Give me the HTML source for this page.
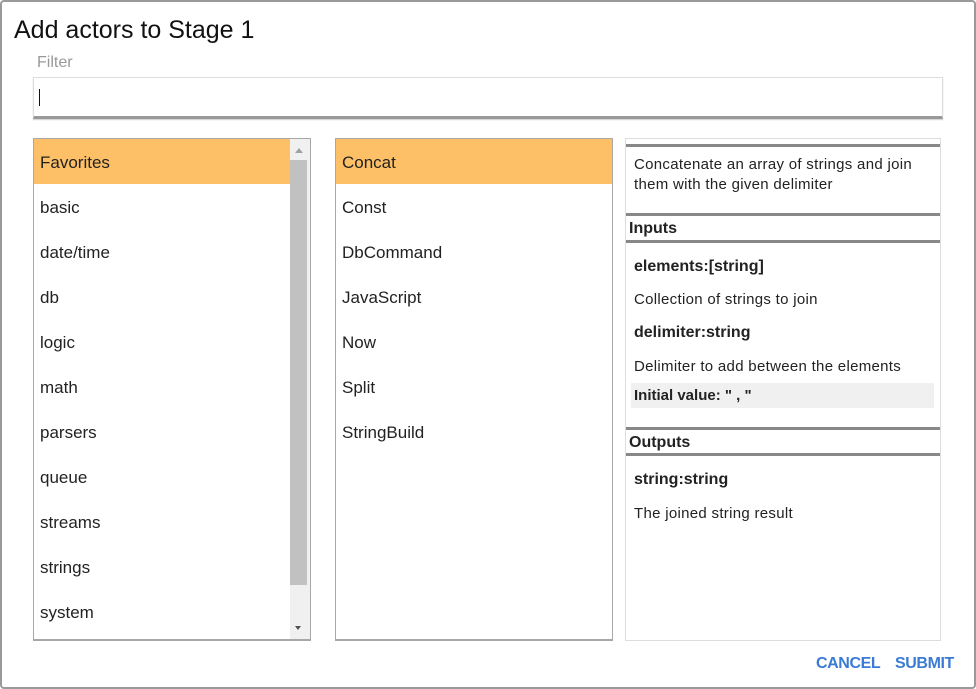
<!DOCTYPE html>
<html><head><style>
*{margin:0;padding:0;box-sizing:border-box}
body{width:976px;height:689px;background:#fff;font-family:"Liberation Sans",Arial,sans-serif;color:#222;position:relative;overflow:hidden}
.dlg{position:absolute;left:0;top:0;width:976px;height:689px;border:2px solid #9a9a9a;border-radius:4px}
.a{position:absolute;white-space:nowrap}
.list{position:absolute;top:138px;height:503px;border:1px solid #a8a8a8;border-bottom:2px solid #a8a8a8}
.it{height:45px;line-height:48px;padding-left:6px;font-size:17px;color:#222}
.sel{background:#fec066}
.hl{position:absolute;left:626px;width:314px;height:3px;background:#888}
.b{font-weight:bold}
.t{font-size:15px;line-height:20px;letter-spacing:.3px}
</style></head><body>
<div class="dlg"></div>
<div class="a" style="left:14px;top:16px;font-size:25px;color:#111">Add actors to Stage 1</div>
<div class="a" style="left:37px;top:54px;font-size:16px;color:#999">Filter</div>
<div class="a" style="left:33px;top:77px;width:910px;height:42px;border:1px solid #ddd;border-bottom:3px solid #999;box-shadow:0 1px 1px #ccc"></div>
<div class="a" style="left:39px;top:89px;width:1px;height:17px;background:#111"></div>

<div class="list" style="left:33px;width:278px">
<div style="width:256px">
<div class="it sel">Favorites</div><div class="it">basic</div><div class="it">date/time</div><div class="it">db</div><div class="it">logic</div><div class="it">math</div><div class="it">parsers</div><div class="it">queue</div><div class="it">streams</div><div class="it">strings</div><div class="it">system</div>
</div>
<div class="a" style="left:256px;top:0;width:20px;height:500px;background:#f0f0f0"></div>
<div class="a" style="left:256px;top:21px;width:17px;height:425px;background:#c1c1c1"></div>
<div class="a" style="left:261px;top:9px;width:0;height:0;border-left:4px solid transparent;border-right:4px solid transparent;border-bottom:5px solid #a0a0a0"></div>
<div class="a" style="left:261px;top:487px;width:0;height:0;border-left:3px solid transparent;border-right:3px solid transparent;border-top:4px solid #505050"></div>
</div>

<div class="list" style="left:335px;width:278px">
<div class="it sel">Concat</div><div class="it">Const</div><div class="it">DbCommand</div><div class="it">JavaScript</div><div class="it">Now</div><div class="it">Split</div><div class="it">StringBuild</div>
</div>

<div class="a" style="left:625px;top:138px;width:316px;height:503px;border:1px solid #ddd"></div>
<div class="hl" style="top:144px"></div>
<div class="a t" style="left:634px;top:155px">Concatenate an array of strings and join<br>them with the given delimiter</div>
<div class="hl" style="top:213px"></div>
<div class="a b" style="left:629px;top:220px;font-size:16px">Inputs</div>
<div class="hl" style="top:240px"></div>
<div class="a t b" style="left:634px;top:257px;font-size:16px;letter-spacing:0">elements:[string]</div>
<div class="a t" style="left:634px;top:290px">Collection of strings to join</div>
<div class="a t b" style="left:634px;top:323px;font-size:16px;letter-spacing:0">delimiter:string</div>
<div class="a t" style="left:634px;top:357px">Delimiter to add between the elements</div>
<div class="a" style="left:631px;top:383px;width:303px;height:25px;background:#f0f0f0"></div>
<div class="a t" style="left:634px;top:386px;color:#222;letter-spacing:0"><span style="font-weight:600">Initial value:</span> <b>" , "</b></div>
<div class="hl" style="top:427px"></div>
<div class="a b" style="left:629px;top:434px;font-size:16px">Outputs</div>
<div class="hl" style="top:453px"></div>
<div class="a t b" style="left:634px;top:470px;font-size:16px;letter-spacing:0">string:string</div>
<div class="a t" style="left:634px;top:504px">The joined string result</div>

<div class="a" style="left:816px;top:655px;font-size:16px;color:#3a7bd5;font-weight:bold;letter-spacing:-0.4px">CANCEL</div>
<div class="a" style="left:895px;top:655px;font-size:16px;color:#3a7bd5;font-weight:bold;letter-spacing:-0.4px">SUBMIT</div>
</body></html>
